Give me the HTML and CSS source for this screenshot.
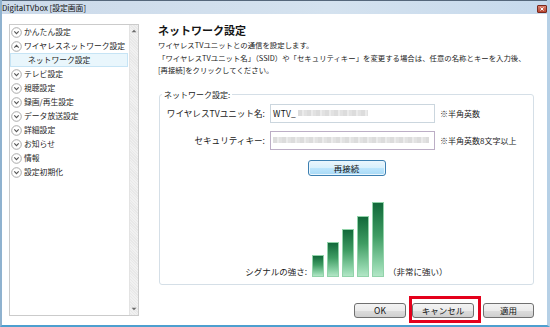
FILE: index.html
```html
<!DOCTYPE html>
<html lang="ja">
<head>
<meta charset="utf-8">
<title>DigitalTVbox [設定画面]</title>
<link rel="stylesheet" href="styles.css">
</head>
<body>
<div class="window">
  <div class="titlebar">
    <span class="title">DigitalTVbox [設定画面]</span>
    <span class="close"><svg width="10" height="8" viewBox="0 0 10 8"><path d="M3 2 L7 6 M7 2 L3 6" stroke="#fff" stroke-width="1.3"/></svg></span>
  </div>
  <div class="client">
    <div class="sidebar">
      <ul class="tree">
        <li class="item"><svg class="ico" viewBox="0 0 11 11"><circle cx="5.5" cy="5.5" r="4.8"/><path d="M3.3 4.4 L5.5 6.6 L7.7 4.4"/></svg><span>かんたん設定</span></li>
        <li class="item"><svg class="ico" viewBox="0 0 11 11"><circle cx="5.5" cy="5.5" r="4.8"/><path d="M3.3 6.6 L5.5 4.4 L7.7 6.6"/></svg><span>ワイヤレスネットワーク設定</span></li>
        <li class="item sub"><span>ネットワーク設定</span></li>
        <li class="item"><svg class="ico" viewBox="0 0 11 11"><circle cx="5.5" cy="5.5" r="4.8"/><path d="M3.3 4.4 L5.5 6.6 L7.7 4.4"/></svg><span>テレビ設定</span></li>
        <li class="item"><svg class="ico" viewBox="0 0 11 11"><circle cx="5.5" cy="5.5" r="4.8"/><path d="M3.3 4.4 L5.5 6.6 L7.7 4.4"/></svg><span>視聴設定</span></li>
        <li class="item"><svg class="ico" viewBox="0 0 11 11"><circle cx="5.5" cy="5.5" r="4.8"/><path d="M3.3 4.4 L5.5 6.6 L7.7 4.4"/></svg><span>録画/再生設定</span></li>
        <li class="item"><svg class="ico" viewBox="0 0 11 11"><circle cx="5.5" cy="5.5" r="4.8"/><path d="M3.3 4.4 L5.5 6.6 L7.7 4.4"/></svg><span>データ放送設定</span></li>
        <li class="item"><svg class="ico" viewBox="0 0 11 11"><circle cx="5.5" cy="5.5" r="4.8"/><path d="M3.3 4.4 L5.5 6.6 L7.7 4.4"/></svg><span>詳細設定</span></li>
        <li class="item"><svg class="ico" viewBox="0 0 11 11"><circle cx="5.5" cy="5.5" r="4.8"/><path d="M3.3 4.4 L5.5 6.6 L7.7 4.4"/></svg><span>お知らせ</span></li>
        <li class="item"><svg class="ico" viewBox="0 0 11 11"><circle cx="5.5" cy="5.5" r="4.8"/><path d="M3.3 4.4 L5.5 6.6 L7.7 4.4"/></svg><span>情報</span></li>
        <li class="item"><svg class="ico" viewBox="0 0 11 11"><circle cx="5.5" cy="5.5" r="4.8"/><path d="M3.3 4.4 L5.5 6.6 L7.7 4.4"/></svg><span>設定初期化</span></li>
      </ul>
      <div class="vscroll">
        <svg class="arrow" viewBox="0 0 7 5"><path d="M0.5 4 L3.5 1 L6.5 4 Z"/></svg>
        <svg class="arrow" viewBox="0 0 7 5"><path d="M0.5 1 L3.5 4 L6.5 1 Z"/></svg>
      </div>
    </div>
    <div class="main">
      <h1 class="heading">ネットワーク設定</h1>
      <p class="desc">ワイヤレスTVユニットとの通信を設定します。<br>「ワイヤレスTVユニット名」（SSID）や「セキュリティキー」を変更する場合は、任意の名称とキーを入力後、<br>[再接続]をクリックしてください。</p>
      <fieldset class="group">
        <legend class="legend">ネットワーク設定:</legend>
        <div class="frow">
          <span class="flabel">ワイヤレスTVユニット名:</span>
          <span class="field"><span class="val">WTV_</span><span class="blur blur-a"></span></span>
          <span class="note">※半角英数</span>
        </div>
        <div class="frow second">
          <span class="flabel">セキュリティキー:</span>
          <span class="field key"><span class="blur blur-b"></span></span>
          <span class="note">※半角英数8文字以上</span>
        </div>
        <div class="btnrow">
          <button class="btn reconnect">再接続</button>
        </div>
        <div class="signal">
          <span class="slabel">シグナルの強さ:</span>
          <div class="bars">
            <span class="bar" style="height:22px"></span>
            <span class="bar" style="height:35px"></span>
            <span class="bar" style="height:48px"></span>
            <span class="bar" style="height:61px"></span>
            <span class="bar" style="height:75px"></span>
          </div>
          <span class="stext">（非常に強い）</span>
        </div>
      </fieldset>
      <div class="actions">
        <button class="btn ok">OK</button>
        <span class="marked"><button class="btn cancel">キャンセル</button></span>
        <button class="btn apply">適用</button>
      </div>
    </div>
  </div>
</div>
</body>
</html>
```

FILE: styles.css
```css
* { box-sizing: border-box; margin: 0; padding: 0; }
html, body { width: 550px; height: 327px; overflow: hidden; }
body {
  font-family: "Noto Sans CJK JP", "Noto Sans", sans-serif;
  color: #1e1e1e;
  background: #fff;
}
.window {
  width: 550px;
  height: 327px;
  display: flex;
  flex-direction: column;
  border-left: 2px solid #8fb2cf;
  border-right: 3px solid #b6d0e6;
  border-bottom: 2px solid #4e9fcf;
  background: #fff;
}
.titlebar {
  height: 14px;
  flex: none;
  display: flex;
  align-items: center;
  justify-content: space-between;
  background: linear-gradient(to right, #ccdaea, #d4e2ef 60%, #c6d9ec);
  border-top: 1px solid #55677b;
  font-size: 7.8px;
  line-height: 10px;
  color: #111;
}
.title { margin-left: 0; }
.close {
  width: 10px;
  height: 8px;
  margin-right: 0;
  margin-top: 2px;
  display: flex;
  background: linear-gradient(#d9826f, #b8442f);
  border: 1px solid #7a2a1e;
  border-radius: 1px;
}
.close svg { width: 8px; height: 6px; }
.client { flex: 1; display: flex; align-items: flex-start; }

/* sidebar */
.sidebar {
  margin-left: 7px;
  margin-top: 10px;
  width: 130px;
  height: 292px;
  border: 1px solid #cbcbcb;
  display: flex;
  flex: none;
}
.tree { flex: 1; list-style: none; }
.item {
  height: 14px;
  display: flex;
  align-items: center;
  gap: 2px;
  padding-left: 1px;
  font-size: 7.8px;
  line-height: 14px;
  color: #262626;
  white-space: nowrap;
}
.ico { width: 11px; height: 11px; flex: none; }
.ico circle { fill: #fff; stroke: #a0a0a0; stroke-width: 0.9; }
.ico path { fill: none; stroke: #555; stroke-width: 1.1; }
.item.sub {
  padding-left: 17px;
  background: #e9f6fc;
  border: 1px solid #c6e4f5;
  margin-right: 1px;
}
.vscroll {
  width: 9px;
  flex: none;
  display: flex;
  flex-direction: column;
  justify-content: space-between;
  align-items: center;
  padding: 4px 0 4px;
  background: repeating-linear-gradient(45deg, #f1f1f1 0 1px, #e8e8e8 1px 2px);
  border-left: 1px solid #e3e3e3;
}
.arrow { width: 6px; height: 4px; }
.arrow path { fill: #6a6a6a; }

/* main */
.main {
  margin-left: 19px;
  width: 376px;
  display: flex;
  flex-direction: column;
  flex: none;
}
.heading {
  font-size: 11px;
  font-weight: bold;
  line-height: 14px;
  margin-top: 9px;
  color: #151515;
}
.desc {
  font-size: 7.4px;
  line-height: 12.5px;
  margin-top: 2px;
  white-space: nowrap;
  color: #222;
}
.group {
  margin-top: 13px;
  margin-left: 1px;
  width: 375px;
  border: 1px solid #d5dfe7;
  border-radius: 3px;
  padding: 4px 0 7px 0;
  min-inline-size: 0;
}
.legend {
  font-size: 8px;
  line-height: 10px;
  margin-left: 2px;
  padding: 0 2px;
  color: #222;
}
.frow {
  display: flex;
  align-items: center;
  height: 19px;
  font-size: 8px;
}
.frow.second { margin-top: 8px; }
.flabel { width: 105px; text-align: right; white-space: nowrap; color: #222; font-size: 8.6px; }
.field {
  margin-left: 5px;
  width: 165px;
  height: 19px;
  border: 1px solid #cbd6de;
  background: #fff;
  display: flex;
  align-items: center;
  padding-left: 2px;
}
.field.key { border-color: #bcaec6; }
.val { font-size: 8.4px; color: #111; letter-spacing: 0.3px; }
.blur {
  height: 6px;
  background: repeating-linear-gradient(90deg, #dcdcdc 0 4px, #ebebeb 4px 6px, #e2e2e2 6px 9px);
  filter: blur(0.7px);
}
.blur-a { width: 70px; margin-left: 2px; }
.blur-b { width: 156px; }
.note { margin-left: 5px; white-space: nowrap; color: #222; }
.btnrow { display: flex; justify-content: center; margin-top: 10px; }
.btn {
  font-family: "Noto Sans CJK JP", "Noto Sans", sans-serif;
  font-size: 8.5px;
  line-height: 12px;
  color: #111;
  border: 1px solid #707070;
  border-radius: 3px;
  background: linear-gradient(#f3f3f3, #ebebeb 50%, #dddddd 51%, #cfcfcf);
}
.reconnect {
  width: 78px;
  height: 16px;
  border-color: #3c7fb1;
  background: linear-gradient(#eaf6fd, #d9f0fc 50%, #bee6fd 51%, #a7d9f5);
  box-shadow: inset 0 0 0 1px #eaf6fd;
}
.signal {
  display: flex;
  align-items: flex-end;
  margin-top: 26px;
  font-size: 8.5px;
  line-height: 12px;
}
.slabel { width: 147px; text-align: right; white-space: nowrap; color: #222; }
.bars { display: flex; align-items: flex-end; gap: 3px; margin-left: 5px; }
.bar {
  width: 12px;
  border: 1px solid #92d3aa;
  background: linear-gradient(#12693a, #3f9c63 45%, #8fd4aa 85%, #b2e6c6);
}
.stext { margin-left: 4px; white-space: nowrap; color: #222; }
.actions {
  display: flex;
  justify-content: flex-end;
  align-items: center;
  margin-top: 18px;
}
.ok, .cancel, .apply { height: 15px; }
.ok { width: 52px; }
.marked { position: relative; display: flex; margin-left: 6px; }
.marked::after {
  content: "";
  position: absolute;
  top: -7px;
  right: -7px;
  bottom: -5px;
  left: -3px;
  border: 3px solid #e4001b;
}
.cancel { width: 62px; }
.apply { width: 51px; margin-left: 9px; }
```
